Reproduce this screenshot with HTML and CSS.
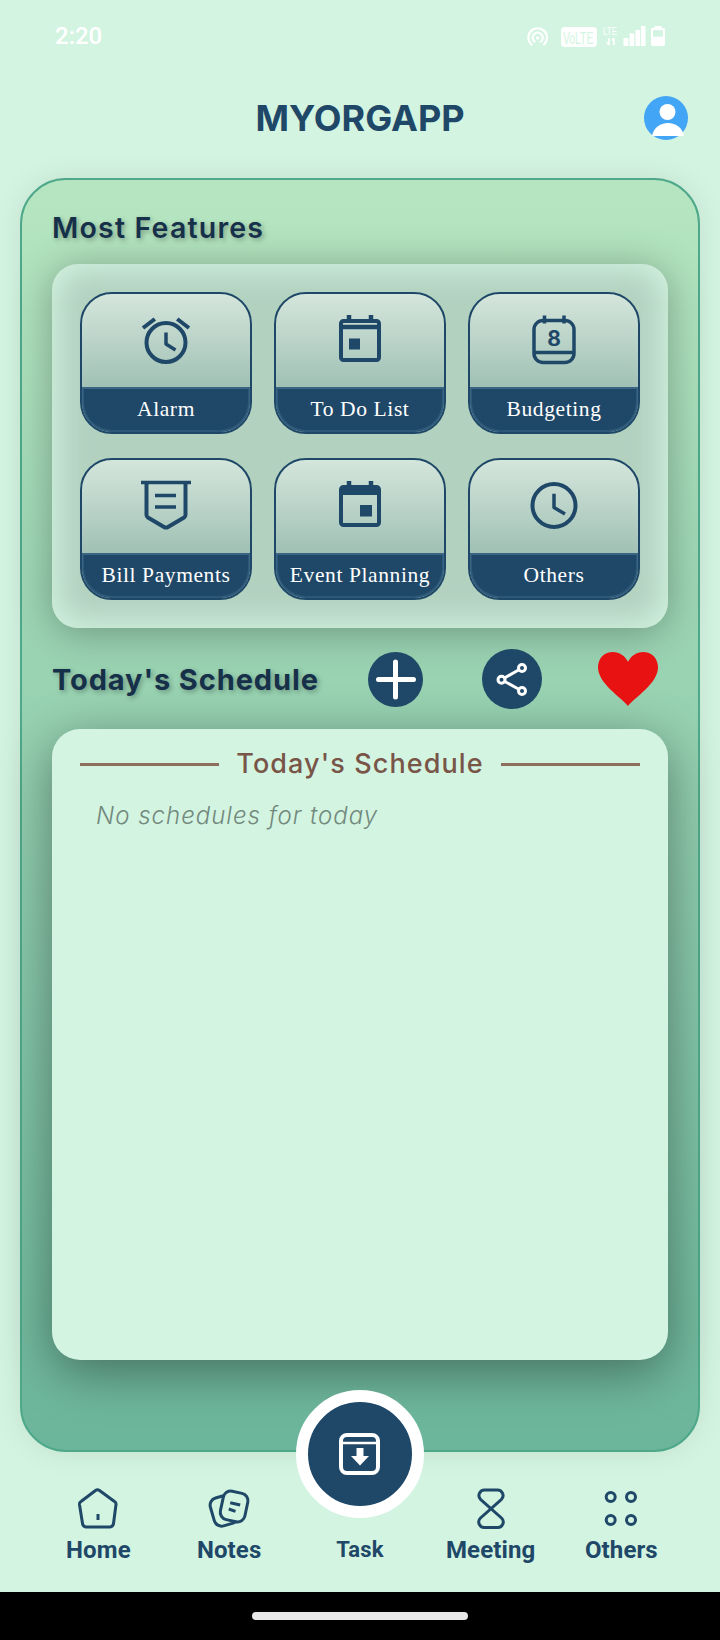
FILE: index.html
```html
<!DOCTYPE html>
<html lang="en">
<head>
<meta charset="UTF-8">
<title>MyOrgApp</title>
<link rel="stylesheet" href="styles.css">
</head>
<body>
<div class="screen">

	<div class="status">
		<span class="clock">2:20</span>
		<svg class="status-icons" width="140" height="24" viewBox="0 0 140 24">
			<g fill="none" stroke="#fff" stroke-width="2.2" stroke-linecap="round">
				<path d="M4.500 18.500a9.300 9.300 0 1 1 12.400 0"/>
				<path d="M7.600 15.600a5 5 0 1 1 6.200 0"/>
			</g>
			<circle cx="10.700" cy="12" r="1.700" fill="#fff"/>
			<rect x="34" y="1" width="36" height="20" rx="4" fill="#fff"/>
			<text transform="translate(36 17.500) scale(0.610 1)" font-family="Liberation Sans" font-size="17" fill="#d3f4e1">VoLTE</text>
			<text transform="translate(76 9) scale(0.800 1)" font-family="Liberation Sans" font-size="10" fill="#fff">LTE</text>
			<path d="M82 12v7M79.800 16.500l2.200 2.600M87 19v-7M85 14.500l2-2.500" fill="none" stroke="#fff" stroke-width="1.600"/>
			<path d="M96.500 12h4.800v8h-4.800zM102.500 7.500h4.800V20h-4.800zM108.500 4h4.600v16h-4.600zM114 0h4.500v20H114z" fill="#fff"/>
			<path d="M127.500 0h7v2h2.200a1.200 1.200 0 0 1 1.200 1.200V18.800a1.200 1.200 0 0 1-1.200 1.200h-11.500a1.200 1.200 0 0 1-1.200-1.200V3.200a1.200 1.200 0 0 1 1.200-1.200h2.300z" fill="#fff"/>
			<rect x="126" y="4.200" width="10" height="6.500" fill="#d3f4e1"/>
		</svg>
	</div>

	<div class="appbar">
		<h1 class="app-title">MYORGAPP</h1>
		<svg class="avatar" width="44" height="44" viewBox="0 0 44 44">
			<circle cx="22" cy="22" r="22" fill="#42a5f5"/>
			<circle cx="23.500" cy="16" r="8" fill="#fff"/>
			<path d="M8 40c1.500-8 8-13 16-13s14.500 5 16 13z" fill="#fff"/>
		</svg>
	</div>

	<div class="main-card">
		<h2 class="section-title features-title">Most Features</h2>

		<div class="features">
			<div class="tile">
				<div class="tile-top">
					<svg width="50" height="50" viewBox="0 0 50 50" class="ico">
						<circle cx="25" cy="28.500" r="19.500"/>
						<path d="M2 14L13.800 5M48 14L36.200 5"/>
						<path d="M25 18.500V30l9.500 6" stroke-width="3.500"/>
					</svg>
				</div>
				<div class="tile-label">Alarm</div>
			</div>
			<div class="tile">
				<div class="tile-top">
					<svg width="50" height="50" viewBox="0 0 50 50" class="ico">
						<rect x="6" y="7" width="38" height="39" rx="2.500"/>
						<path d="M6 13h38M14 1v6M36 1v6" stroke-width="4.500"/>
						<rect class="solid" x="14" y="24.500" width="11" height="11"/>
					</svg>
				</div>
				<div class="tile-label">To Do List</div>
			</div>
			<div class="tile">
				<div class="tile-top">
					<svg width="50" height="50" viewBox="0 0 50 50" class="ico">
						<rect x="5" y="6.500" width="40" height="42" rx="9" stroke-width="3.500"/>
						<path d="M15.500 1.500v8M35 1.500v8M5 38.500h40" stroke-width="3.500"/>
						<text class="ico-digit" x="25" y="32" text-anchor="middle">8</text>
					</svg>
				</div>
				<div class="tile-label">Budgeting</div>
			</div>
			<div class="tile">
				<div class="tile-top">
					<svg width="50" height="50" viewBox="0 0 50 50" class="ico">
						<path d="M0 2.500h50" stroke-width="3.500"/>
						<path d="M5.500 2.500V35a3 3 0 0 0 1.400 2.500L23 47a4 4 0 0 0 4 0L43.100 37.500a3 3 0 0 0 1.400-2.500V2.500"/>
						<path d="M14 15.500h21M14 27h21" stroke-width="3.500"/>
					</svg>
				</div>
				<div class="tile-label">Bill Payments</div>
			</div>
			<div class="tile">
				<div class="tile-top">
					<svg width="50" height="50" viewBox="0 0 50 50" class="ico">
						<rect x="6" y="7" width="38" height="38" rx="2.500"/>
						<path class="solid" d="M6 7h38v8H6z"/>
						<path d="M14 1v6M36 1v6" stroke-width="4.500"/>
						<rect class="solid" x="25" y="25" width="12" height="11.500"/>
					</svg>
				</div>
				<div class="tile-label">Event Planning</div>
			</div>
			<div class="tile">
				<div class="tile-top">
					<svg width="50" height="50" viewBox="0 0 50 50" class="ico">
						<circle cx="25" cy="25.500" r="21.500"/>
						<path d="M25 13.800V27.500l11 6.500" stroke-width="3.500"/>
					</svg>
				</div>
				<div class="tile-label">Others</div>
			</div>
		</div>

		<div class="schedule-head">
			<h2 class="section-title schedule-title">Today's Schedule</h2>
			<svg class="btn-add" width="55" height="55" viewBox="0 0 55 55">
				<circle cx="27.500" cy="27.500" r="27.500" fill="#1f4868"/>
				<path d="M10.500 27.500h35M27.500 10v35" stroke="#fff" stroke-width="5" stroke-linecap="round"/>
			</svg>
			<svg class="btn-share" width="60" height="60" viewBox="0 0 60 60">
				<circle cx="30" cy="30" r="30" fill="#1f4868"/>
				<path d="M19.500 30.700L40 19M19.500 30.700L40 42" stroke="#fff" stroke-width="3"/>
				<g fill="#1f4868" stroke="#fff" stroke-width="3">
					<circle cx="40" cy="19" r="3.500"/>
					<circle cx="19.500" cy="30.700" r="3.500"/>
					<circle cx="40" cy="42" r="3.500"/>
				</g>
			</svg>
			<svg class="btn-heart" width="60" height="54" viewBox="0 0 62 55" preserveAspectRatio="none">
				<path d="M31 55C24 46 0 32 0 15.500 0 6 7 0 15.500 0 22 0 28 4 31 10 34 4 40 0 46.500 0 55 0 62 6 62 15.500 62 32 38 46 31 55z" fill="#e91212"/>
			</svg>
		</div>

		<div class="schedule-card">
			<div class="schedule-card-head">
				<span class="rule"></span>
				<span class="schedule-card-title">Today's Schedule</span>
				<span class="rule"></span>
			</div>
			<p class="empty">No schedules for today</p>
		</div>
	</div>

	<div class="nav">
		<div class="nav-item">
			<svg width="44" height="44" viewBox="0 0 44 44" class="ico nav-ico">
				<path d="M19.500 3.500a3.500 3.500 0 0 1 4 0L38.500 14.500a3 3 0 0 1 1.500 3L37.500 36.500a4 4 0 0 1-3.500 3.500H10a4 4 0 0 1-3.500-3.500L3.500 17.500a3 3 0 0 1 1.500-3z" stroke-width="3"/>
				<path d="M22 27v6" stroke-width="3"/>
			</svg>
			<span>Home</span>
		</div>
		<div class="nav-item">
			<svg width="44" height="44" viewBox="0 0 44 44" class="ico nav-ico">
				<rect x="5" y="9" width="25" height="29" rx="7.500" transform="rotate(-16 17.500 24)" stroke-width="3"/>
				<rect class="bg-fill" x="14.500" y="5" width="25" height="29" rx="7.500" transform="rotate(12 27 20)" stroke-width="3"/>
				<path d="M23.200 15.700l10 2.300M21.800 22l6.700 2.300" stroke-width="3"/>
			</svg>
			<span>Notes</span>
		</div>
		<div class="nav-item task">
			<div class="fab">
				<svg width="52" height="52" viewBox="0 0 52 52">
					<rect x="7" y="7" width="37" height="38" rx="6" fill="none" stroke="#fff" stroke-width="4"/>
					<path d="M7 15h37" stroke="#fff" stroke-width="2.500"/>
					<path d="M22.500 20h7v8h5.500l-9 9.500-9-9.500h5.500z" fill="#fff"/>
				</svg>
			</div>
			<span>Task</span>
		</div>
		<div class="nav-item">
			<svg width="44" height="44" viewBox="0 0 44 44" class="ico nav-ico">
				<path d="M15.500 3h13a5.500 5.500 0 0 1 4 9.300L11.500 31a5.500 5.500 0 0 0 4 9.500h13a5.500 5.500 0 0 0 4-9.500L11.500 12.300a5.500 5.500 0 0 1 4-9.300z" stroke-width="3"/>
			</svg>
			<span>Meeting</span>
		</div>
		<div class="nav-item">
			<svg width="44" height="44" viewBox="0 0 44 44" class="ico nav-ico">
				<circle cx="11.700" cy="10" r="4.500" stroke-width="3"/>
				<circle cx="32" cy="10" r="4.500" stroke-width="3"/>
				<circle cx="11.700" cy="33" r="4.500" stroke-width="3"/>
				<circle cx="32" cy="33" r="4.500" stroke-width="3"/>
			</svg>
			<span>Others</span>
		</div>
	</div>

	<div class="home-bar">
		<span class="home-pill"></span>
	</div>

</div>
</body>
</html>
```

FILE: styles.css
```css
* {
	box-sizing: border-box;
	margin: 0;
	padding: 0;
}

body {
	background: #d3f4e1;
	font-family: Inter, "Liberation Sans", sans-serif;
}

.screen {
	width: 720px;
	height: 1640px;
	display: flex;
	flex-direction: column;
	position: relative;
	overflow: hidden;
}

/* status bar */
.status {
	height: 60px;
	display: flex;
	justify-content: space-between;
	padding: 26px 53px 0 55px;
	flex: none;
}

.clock {
	color: #fff;
	font: 500 24px/20px Roboto, sans-serif;
}

.status-icons {
	display: block;
}

/* app bar */
.appbar {
	height: 118px;
	flex: none;
	display: flex;
	align-items: center;
	justify-content: center;
	position: relative;
}

.app-title {
	color: #1f4868;
	font-size: 36px;
	font-weight: 700;
	line-height: 44px;
	margin-top: -2px;
}

.avatar {
	position: absolute;
	right: 32px;
	top: 36px;
}

/* big green card */
.main-card {
	height: 1274px;
	flex: none;
	margin: 0 20px;
	padding: 28px 30px 0;
	border: 2px solid #4fa88a;
	border-radius: 46px;
	background: linear-gradient(#b6e6c1, #6bb59b);
	box-shadow: 0 0 30px rgba(0, 0, 0, 0.08);
}

.section-title {
	color: #17304a;
	font-size: 28.500px;
	font-weight: 600;
	line-height: 40px;
	text-shadow: 2px 2px 5px rgba(0, 0, 0, 0.3);
}

.features-title {
	letter-spacing: 1.200px;
}

.features {
	margin-top: 16px;
	height: 364px;
	padding: 28px;
	display: grid;
	grid-template-columns: repeat(3, 172px);
	grid-auto-rows: 142px;
	column-gap: 22px;
	row-gap: 24px;
	border-radius: 26px;
	background: #b2d1bf;
	box-shadow: inset 0 0 32px 6px #d3f4e1, 0 4px 40px rgba(0, 0, 0, 0.3);
}

.tile {
	display: flex;
	flex-direction: column;
	border: 2px solid #1f4868;
	border-radius: 32px;
	overflow: hidden;
}

.tile-top {
	height: 93px;
	padding-bottom: 3px;
	display: flex;
	align-items: center;
	justify-content: center;
	background: linear-gradient(rgba(255, 255, 255, 0.45), rgba(31, 72, 104, 0.12));
}

.tile-label {
	flex: 1;
	display: flex;
	align-items: center;
	justify-content: center;
	background: #1f4868;
	color: #fff;
	font: 21.500px "Liberation Serif", serif;
	letter-spacing: 0.600px;
	border-radius: 0 0 30px 30px;
	box-shadow: inset 0 1px 0 1px #3a6584, inset 0 0 0 2px #2e5878;
}

.ico {
	fill: none;
	stroke: #1f4868;
	stroke-width: 4;
	stroke-linejoin: round;
	overflow: visible;
	display: block;
}

.ico .solid {
	fill: #1f4868;
	stroke: none;
}

.ico .bg-fill {
	fill: #d3f4e1;
}

.ico-digit {
	fill: #1f4868;
	stroke: none;
	font: 700 21px Inter, sans-serif;
}

/* today's schedule row */
.schedule-head {
	margin-top: 21px;
	height: 60px;
	display: flex;
	align-items: center;
	padding-right: 10px;
}

.schedule-title {
	font-size: 29px;
	font-weight: 700;
	letter-spacing: 0.900px;
	margin-right: auto;
	padding-top: 1px;
}

.btn-add {
	margin-right: 59px;
}

.btn-share {
	margin-right: 56.500px;
}

.schedule-card {
	margin-top: 20px;
	height: 631px;
	padding: 15px 28px 0;
	border-radius: 28px;
	background: #d3f4e1;
	box-shadow: 0 12px 50px rgba(0, 0, 0, 0.4);
}

.schedule-card-head {
	display: flex;
	align-items: center;
	gap: 17px;
}

.rule {
	flex: 1;
	height: 3px;
	background: #8d6e5a;
}

.schedule-card-title {
	color: #795548;
	font-size: 27px;
	font-weight: 500;
	line-height: 40px;
	letter-spacing: 1.100px;
}

.empty {
	margin: 14px 0 0 16px;
	color: #72897d;
	font-size: 24px;
	font-style: italic;
	font-weight: 300;
	line-height: 36px;
	letter-spacing: 1px;
}

/* bottom nav */
.nav {
	flex: 1;
	display: grid;
	grid-template-columns: repeat(5, 130.750px);
	padding: 35px 0 0 33px;
}

.nav-item {
	display: flex;
	flex-direction: column;
	align-items: center;
	color: #1f4868;
	font: 700 24px/28px Roboto, sans-serif;
	letter-spacing: 0.100px;
}

.nav-ico {
	margin-bottom: 5px;
}

.task {
	font-size: 22px;
	padding-top: 49px;
}

.fab {
	position: absolute;
	left: 296px;
	top: 1390px;
	width: 128px;
	height: 128px;
	border: 12px solid #fff;
	border-radius: 50%;
	background: #1f4868;
	display: flex;
	align-items: center;
	justify-content: center;
}

.home-bar {
	height: 48px;
	flex: none;
	background: #000;
	display: flex;
	justify-content: center;
	padding-top: 20px;
}

.home-pill {
	width: 216px;
	height: 8px;
	border-radius: 4px;
	background: #e8e8e8;
}
```
